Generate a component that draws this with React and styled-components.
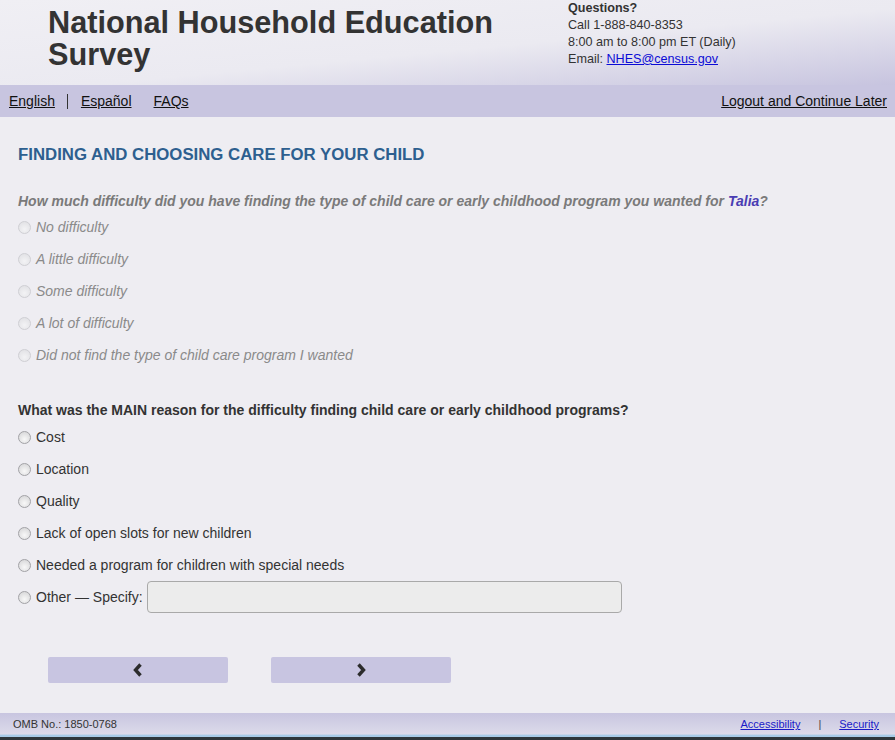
import React from "react";
import styled, { createGlobalStyle } from "styled-components";

const GlobalStyle = createGlobalStyle`
  html, body {
    margin: 0;
    padding: 0;
    background: #eeedf2;
    font-family: "Liberation Sans", Arial, sans-serif;
    color: #333;
  }
`;

const difficultyOptions = [
  "No difficulty",
  "A little difficulty",
  "Some difficulty",
  "A lot of difficulty",
  "Did not find the type of child care program I wanted",
];

const reasonOptions = [
  "Cost",
  "Location",
  "Quality",
  "Lack of open slots for new children",
  "Needed a program for children with special needs",
];

const Chevron = ({ dir }) => (
  <svg width="10" height="14" viewBox="0 0 10 14">
    <polyline
      points={dir === "left" ? "7.5,1.5 2.5,7 7.5,12.5" : "2.5,1.5 7.5,7 2.5,12.5"}
      fill="none"
      stroke="#2c2c2c"
      strokeWidth="3.4"
      strokeLinejoin="miter"
    />
  </svg>
);

const App = () => {
  return (
    <>
      <GlobalStyle />
      <Page>
        <Header>
          <Title>National Household Education Survey</Title>
          <Contact>
            <strong>Questions?</strong>
            <span>Call 1-888-840-8353</span>
            <span>8:00 am to 8:00 pm ET (Daily)</span>
            <span>
              Email: <MailLink href="#">NHES@census.gov</MailLink>
            </span>
          </Contact>
        </Header>

        <NavBar>
          <NavGroup>
            <NavLink href="#" $divider>English</NavLink>
            <NavLink href="#">Español</NavLink>
            <NavLink href="#">FAQs</NavLink>
          </NavGroup>
          <NavLink href="#">Logout and Continue Later</NavLink>
        </NavBar>

        <Main>
          <SectionTitle>FINDING AND CHOOSING CARE FOR YOUR CHILD</SectionTitle>

          <Question $disabled>
            How much difficulty did you have finding the type of child care or
            early childhood program you wanted for <Name>Talia</Name>?
          </Question>
          {difficultyOptions.map((opt) => (
            <Option key={opt} $disabled>
              <Radio type="radio" name="difficulty" disabled $disabled />
              {opt}
            </Option>
          ))}

          <Question $spaced>
            What was the MAIN reason for the difficulty finding child care or
            early childhood programs?
          </Question>
          {reasonOptions.map((opt) => (
            <Option key={opt}>
              <Radio type="radio" name="reason" />
              {opt}
            </Option>
          ))}
          <Option>
            <Radio type="radio" name="reason" />
            Other — Specify:
            <SpecifyInput type="text" />
          </Option>

          <ButtonRow>
            <NavButton aria-label="Previous">
              <Chevron dir="left" />
            </NavButton>
            <NavButton aria-label="Next">
              <Chevron dir="right" />
            </NavButton>
          </ButtonRow>
        </Main>

        <Footer>
          <span>OMB No.: 1850-0768</span>
          <FooterLinks>
            <FooterLink href="#">Accessibility</FooterLink>
            <Pipe>|</Pipe>
            <FooterLink href="#">Security</FooterLink>
          </FooterLinks>
        </Footer>
      </Page>
    </>
  );
};

export default App;

const Page = styled.div`
  min-height: 100vh;
  display: flex;
  flex-direction: column;
`;

const Header = styled.header`
  height: 85px;
  display: flex;
  padding-left: 48px;
  box-sizing: border-box;
  background: linear-gradient(to bottom right, #f0eff4 0%, #ebeaf1 55%, #c7c4df 100%);
`;

const Title = styled.h1`
  flex: 0 0 520px;
  margin: 0;
  padding-top: 7px;
  font-size: 30.7px;
  line-height: 32px;
  font-weight: bold;
  color: #333;
`;

const Contact = styled.div`
  display: flex;
  flex-direction: column;
  font-size: 12.6px;
  line-height: 17px;
  color: #333;

  strong {
    font-weight: bold;
  }
`;

const MailLink = styled.a`
  color: #0b0bd6;
`;

const NavBar = styled.nav`
  height: 32px;
  display: flex;
  align-items: center;
  justify-content: space-between;
  padding: 0 8px 0 9px;
  background: #c8c5e0;
  font-size: 14px;
`;

const NavGroup = styled.div`
  display: flex;
  align-items: center;
  gap: 22px;
`;

const NavLink = styled.a`
  color: #111;
  text-decoration: underline;
  ${(p) =>
    p.$divider &&
    `
    padding-right: 12px;
    margin-right: -9px;
    border-right: 1px solid #333;
    line-height: 15px;
  `}
`;

const Main = styled.main`
  padding: 28px 18px 0;
  font-size: 14px;
`;

const SectionTitle = styled.h2`
  margin: 0 0 26px;
  font-size: 16.8px;
  line-height: 20px;
  font-weight: bold;
  color: #2d5f8f;
`;

const Question = styled.p`
  margin: ${(p) => (p.$spaced ? "29px 0 1px" : "0")};
  line-height: 20px;
  font-weight: bold;
  font-style: ${(p) => (p.$disabled ? "italic" : "normal")};
  color: ${(p) => (p.$disabled ? "#7a7a7a" : "#333")};
`;

const Name = styled.span`
  color: #4a3db3;
`;

const Option = styled.label`
  height: 32px;
  display: flex;
  align-items: center;
  font-style: ${(p) => (p.$disabled ? "italic" : "normal")};
  color: ${(p) => (p.$disabled ? "#8a8a8a" : "#333")};
`;

const Radio = styled.input`
  appearance: none;
  width: 13px;
  height: 13px;
  margin: 0 5px 0 0;
  border-radius: 50%;
  border: 1px solid ${(p) => (p.$disabled ? "#cfcfd4" : "#a2a2a6")};
  background: ${(p) =>
    p.$disabled
      ? "radial-gradient(circle at 50% 65%, #f3f3f5 0%, #dedee2 100%)"
      : "radial-gradient(circle at 50% 65%, #f8f8f8 0%, #d2d2d4 100%)"};
  box-sizing: border-box;
`;

const SpecifyInput = styled.input`
  width: 475px;
  height: 32px;
  margin-left: 4px;
  box-sizing: border-box;
  border: 1px solid #a9a9a9;
  border-radius: 4px;
  background: #ececec;
`;

const ButtonRow = styled.div`
  display: flex;
  gap: 43px;
  margin: 44px 0 30px 30px;
`;

const NavButton = styled.button`
  width: 180px;
  height: 26px;
  display: flex;
  align-items: center;
  justify-content: center;
  padding: 0;
  border: none;
  border-radius: 2px;
  background: #c8c5e1;
  cursor: pointer;
`;

const Footer = styled.footer`
  margin-top: auto;
  height: 27px;
  box-sizing: border-box;
  display: flex;
  align-items: center;
  justify-content: space-between;
  padding: 0 16px 5px 13px;
  font-size: 11px;
  color: #333;
  background: linear-gradient(
    to bottom,
    #c8c5e0 0%,
    #dcdbea 78%,
    #a7cbe7 82%,
    #a7cbe7 90%,
    #2e373b 90%,
    #2e373b 100%
  );
`;

const FooterLinks = styled.div`
  display: flex;
  gap: 18px;
`;

const FooterLink = styled.a`
  color: #1a1ac8;
`;

const Pipe = styled.span`
  color: #444;
`;
